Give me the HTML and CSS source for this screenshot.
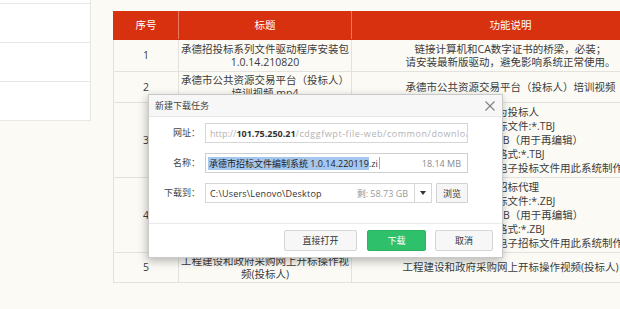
FILE: index.html
```html
<!DOCTYPE html>
<html lang="zh-CN">
<head>
<meta charset="utf-8">
<title>下载</title>
<link rel="stylesheet" href="styles.css">
</head>
<body>
<div class="page">
  <aside class="side">
    <div class="side-item first"></div>
    <div class="side-item"></div>
    <div class="side-item"></div>
    <div class="side-item"></div>
  </aside>
  <main class="content">
    <table class="tools">
      <colgroup><col class="c1"><col class="c2"><col class="c3"></colgroup>
      <thead>
        <tr class="head"><th>序号</th><th>标题</th><th>功能说明</th></tr>
      </thead>
      <tbody>
        <tr class="r1">
          <td>1</td>
          <td>承德招投标系列文件驱动程序安装包<br>1.0.14.210820</td>
          <td>链接计算机和CA数字证书的桥梁，必装；<br>请安装最新版驱动，避免影响系统正常使用。</td>
        </tr>
        <tr class="r2">
          <td>2</td>
          <td>承德市公共资源交易平台（投标人）培训视频.mp4</td>
          <td>承德市公共资源交易平台（投标人）培训视频</td>
        </tr>
        <tr class="r3">
          <td>3</td>
          <td>承德市投标文件编制系统</td>
          <td class="long"><div class="notes">用于编制投标文件，适用的对象为投标人<br>本系统可以生成已加密的电子投标文件:*.TBJ<br>同时生成未加密备份投标文件.HTB（用于再编辑）<br>导出用于上传的投标文件所对应格式:*.TBJ<br>投标人所有需要上传到交易平台电子投标文件用此系统制作</div></td>
        </tr>
        <tr class="r4">
          <td>4</td>
          <td>承德市招标文件编制系统</td>
          <td class="long"><div class="notes">用于编制招标文件，适用对象为招标代理<br>本系统可以生成已加密的电子招标文件:*.ZBJ<br>同时生成未加密备份招标文件.HZB（用于再编辑）<br>导出用于上传的招标文件所对应格式:*.ZBJ<br>招标人所有需要上传到交易平台电子招标文件用此系统制作</div></td>
        </tr>
        <tr class="r5">
          <td>5</td>
          <td>工程建设和政府采购网上开标操作视频(投标人)</td>
          <td>工程建设和政府采购网上开标操作视频(投标人)</td>
        </tr>
      </tbody>
    </table>
  </main>
</div>

<div class="dialog">
  <div class="dlg-title">
    <span>新建下载任务</span>
    <svg class="close" width="10" height="10" viewBox="0 0 10 10"><path d="M0.5 0.5L9.5 9.5M9.5 0.5L0.5 9.5" stroke="#808080" stroke-width="1.1" fill="none"/></svg>
  </div>
  <div class="dlg-body">
    <label class="lbl">网址：</label>
    <div class="field url"><span class="dim">http://</span><b class="host">101.75.250.21</b><span class="dim rest">/cdggfwpt-file-web/common/download/file</span></div>

    <label class="lbl">名称：</label>
    <div class="field name"><span class="sel">承德市招标文件编制系统 1.0.14.220119</span><span>.zi</span><span class="caret"></span><span class="size">18.14 MB</span></div>

    <label class="lbl">下载到：</label>
    <div class="pathrow">
      <div class="field path"><span>C:\Users\Lenovo\Desktop</span><span class="free">剩: 58.73 GB</span></div>
      <div class="drop"><span class="tri"></span></div>
      <button class="browse">浏览</button>
    </div>
  </div>
  <div class="dlg-foot">
    <button class="btn w-open">直接打开</button>
    <button class="btn primary w-dl">下载</button>
    <button class="btn w-cancel">取消</button>
  </div>
</div>
</body>
</html>
```

FILE: styles.css
```css
* { box-sizing: border-box; margin: 0; padding: 0; }
html, body { overflow: hidden; }
body {
  width: 620px;
  height: 309px;
  position: relative;
  background: #fbfaf5;
  font-family: "Open Sans", "Noto Sans CJK SC", sans-serif;
  color: #3a3a3a;
}

.page { display: flex; align-items: flex-start; }

.side {
  flex: none;
  width: 91px;
  background: #fff;
  border-right: 1px solid #e6e6e6;
}
.side-item { height: 39px; border-bottom: 1px solid #e8e8e8; }
.side-item.first { height: 4px; }

.content { padding: 11px 0 0 22px; }

.tools {
  border-collapse: collapse;
  table-layout: fixed;
  width: 556px;
  font-size: 10.5px;
  line-height: 13px;
}
.c1 { width: 65px; }
.c2 { width: 173px; }
.c3 { width: 318px; }

.tools th {
  background: #d8310f;
  color: #fff;
  font-weight: normal;
  height: 28px;
  border: 1px solid #d8310f;
  border-right-color: #e8795f;
}
.tools td {
  border: 1px solid #e3e2de;
  text-align: center;
  vertical-align: middle;
  padding: 0 2px;
  color: #3c3c3c;
}
.r1 td { height: 32px; }
.r2 td { height: 31px; }
.r3 td, .r4 td { height: 75px; }
.r5 td { height: 30px; }

.tools td.long {
  text-align: left;
  line-height: 14px;
  white-space: nowrap;
  padding: 0;
}
.notes { margin-left: -2px; }

/* dialog */
.dialog {
  position: absolute;
  left: 148px;
  top: 94px;
  width: 355px;
  height: 164px;
  background: #fff;
  border: 1px solid #c9c9c9;
  box-shadow: -1px 3px 9px rgba(0, 0, 0, 0.28);
  display: flex;
  flex-direction: column;
  font-size: 9px;
  color: #333;
}
.dlg-title {
  height: 22px;
  flex: none;
  display: flex;
  align-items: center;
  justify-content: space-between;
  padding: 0 7px 0 6px;
  background: #f7f7f7;
  border-bottom: 1px solid #e8e8e8;
  color: #444;
  font-size: 9px;
}
.close { display: block; margin-top: 1px; }

.dlg-body {
  flex: 1;
  display: grid;
  grid-template-columns: 51px 263px;
  column-gap: 5px;
  row-gap: 10px;
  align-content: start;
  padding-top: 6px;
}
.lbl {
  text-align: right;
  line-height: 20px;
  color: #444;
  white-space: nowrap;
}
.field {
  height: 20px;
  border: 1px solid #d6d6d6;
  background: #fff;
  display: flex;
  align-items: center;
  padding: 0 6px 0 3px;
  white-space: nowrap;
  overflow: hidden;
  font-size: 9px;
  color: #333;
}
.url .dim { color: #b3b3b3; }
.url .rest { letter-spacing: 0.55px; }
.url .host { color: #333; font-weight: bold; }
.url span:first-child { padding-left: 1px; }

.name { border-color: #cfcfcf; padding-left: 2px; }
.sel { background: #a5c7ef; color: #222; line-height: 13px; padding: 0 0 0 1px; }
.caret {
  display: inline-block;
  width: 1px;
  height: 12px;
  background: #e89a4e;
  margin-left: 1px;
}
.size { margin-left: auto; color: #8a8a8a; }

.pathrow { display: flex; align-items: center; gap: 4px; }
.path { width: 210px; padding-left: 4px; margin-right: -4px; }
.path span:first-child { letter-spacing: 0.2px; }
.free { margin-left: auto; color: #9a9a9a; }
.drop {
  width: 17px;
  height: 20px;
  border: 1px solid #d6d6d6;
  border-left: none;
  display: flex;
  align-items: center;
  justify-content: center;
  background: #fff;
}
.tri {
  width: 0;
  height: 0;
  border-left: 3px solid transparent;
  border-right: 3px solid transparent;
  border-top: 4px solid #333;
}
.browse {
  width: 32px;
  height: 20px;
  border: 1px solid #d2d2d2;
  background: #f6f6f6;
  font-family: inherit;
  font-size: 9px;
  color: #333;
  border-radius: 1px;
}

.dlg-foot {
  flex: none;
  border-top: 1px solid #eaeaea;
  display: flex;
  justify-content: flex-end;
  gap: 10px;
  padding: 6px 9px 6px 0;
}
.btn {
  height: 21px;
  border: 1px solid #d5d5d5;
  background: #f7f7f7;
  border-radius: 2px;
  font-family: inherit;
  font-size: 9px;
  color: #333;
}
.btn.primary {
  background: #2fc06b;
  border-color: #2bb563;
  color: #fff;
}
.w-open { width: 73px; }
.w-dl { width: 59px; }
.w-cancel { width: 58px; margin-left: -1px; }
```
